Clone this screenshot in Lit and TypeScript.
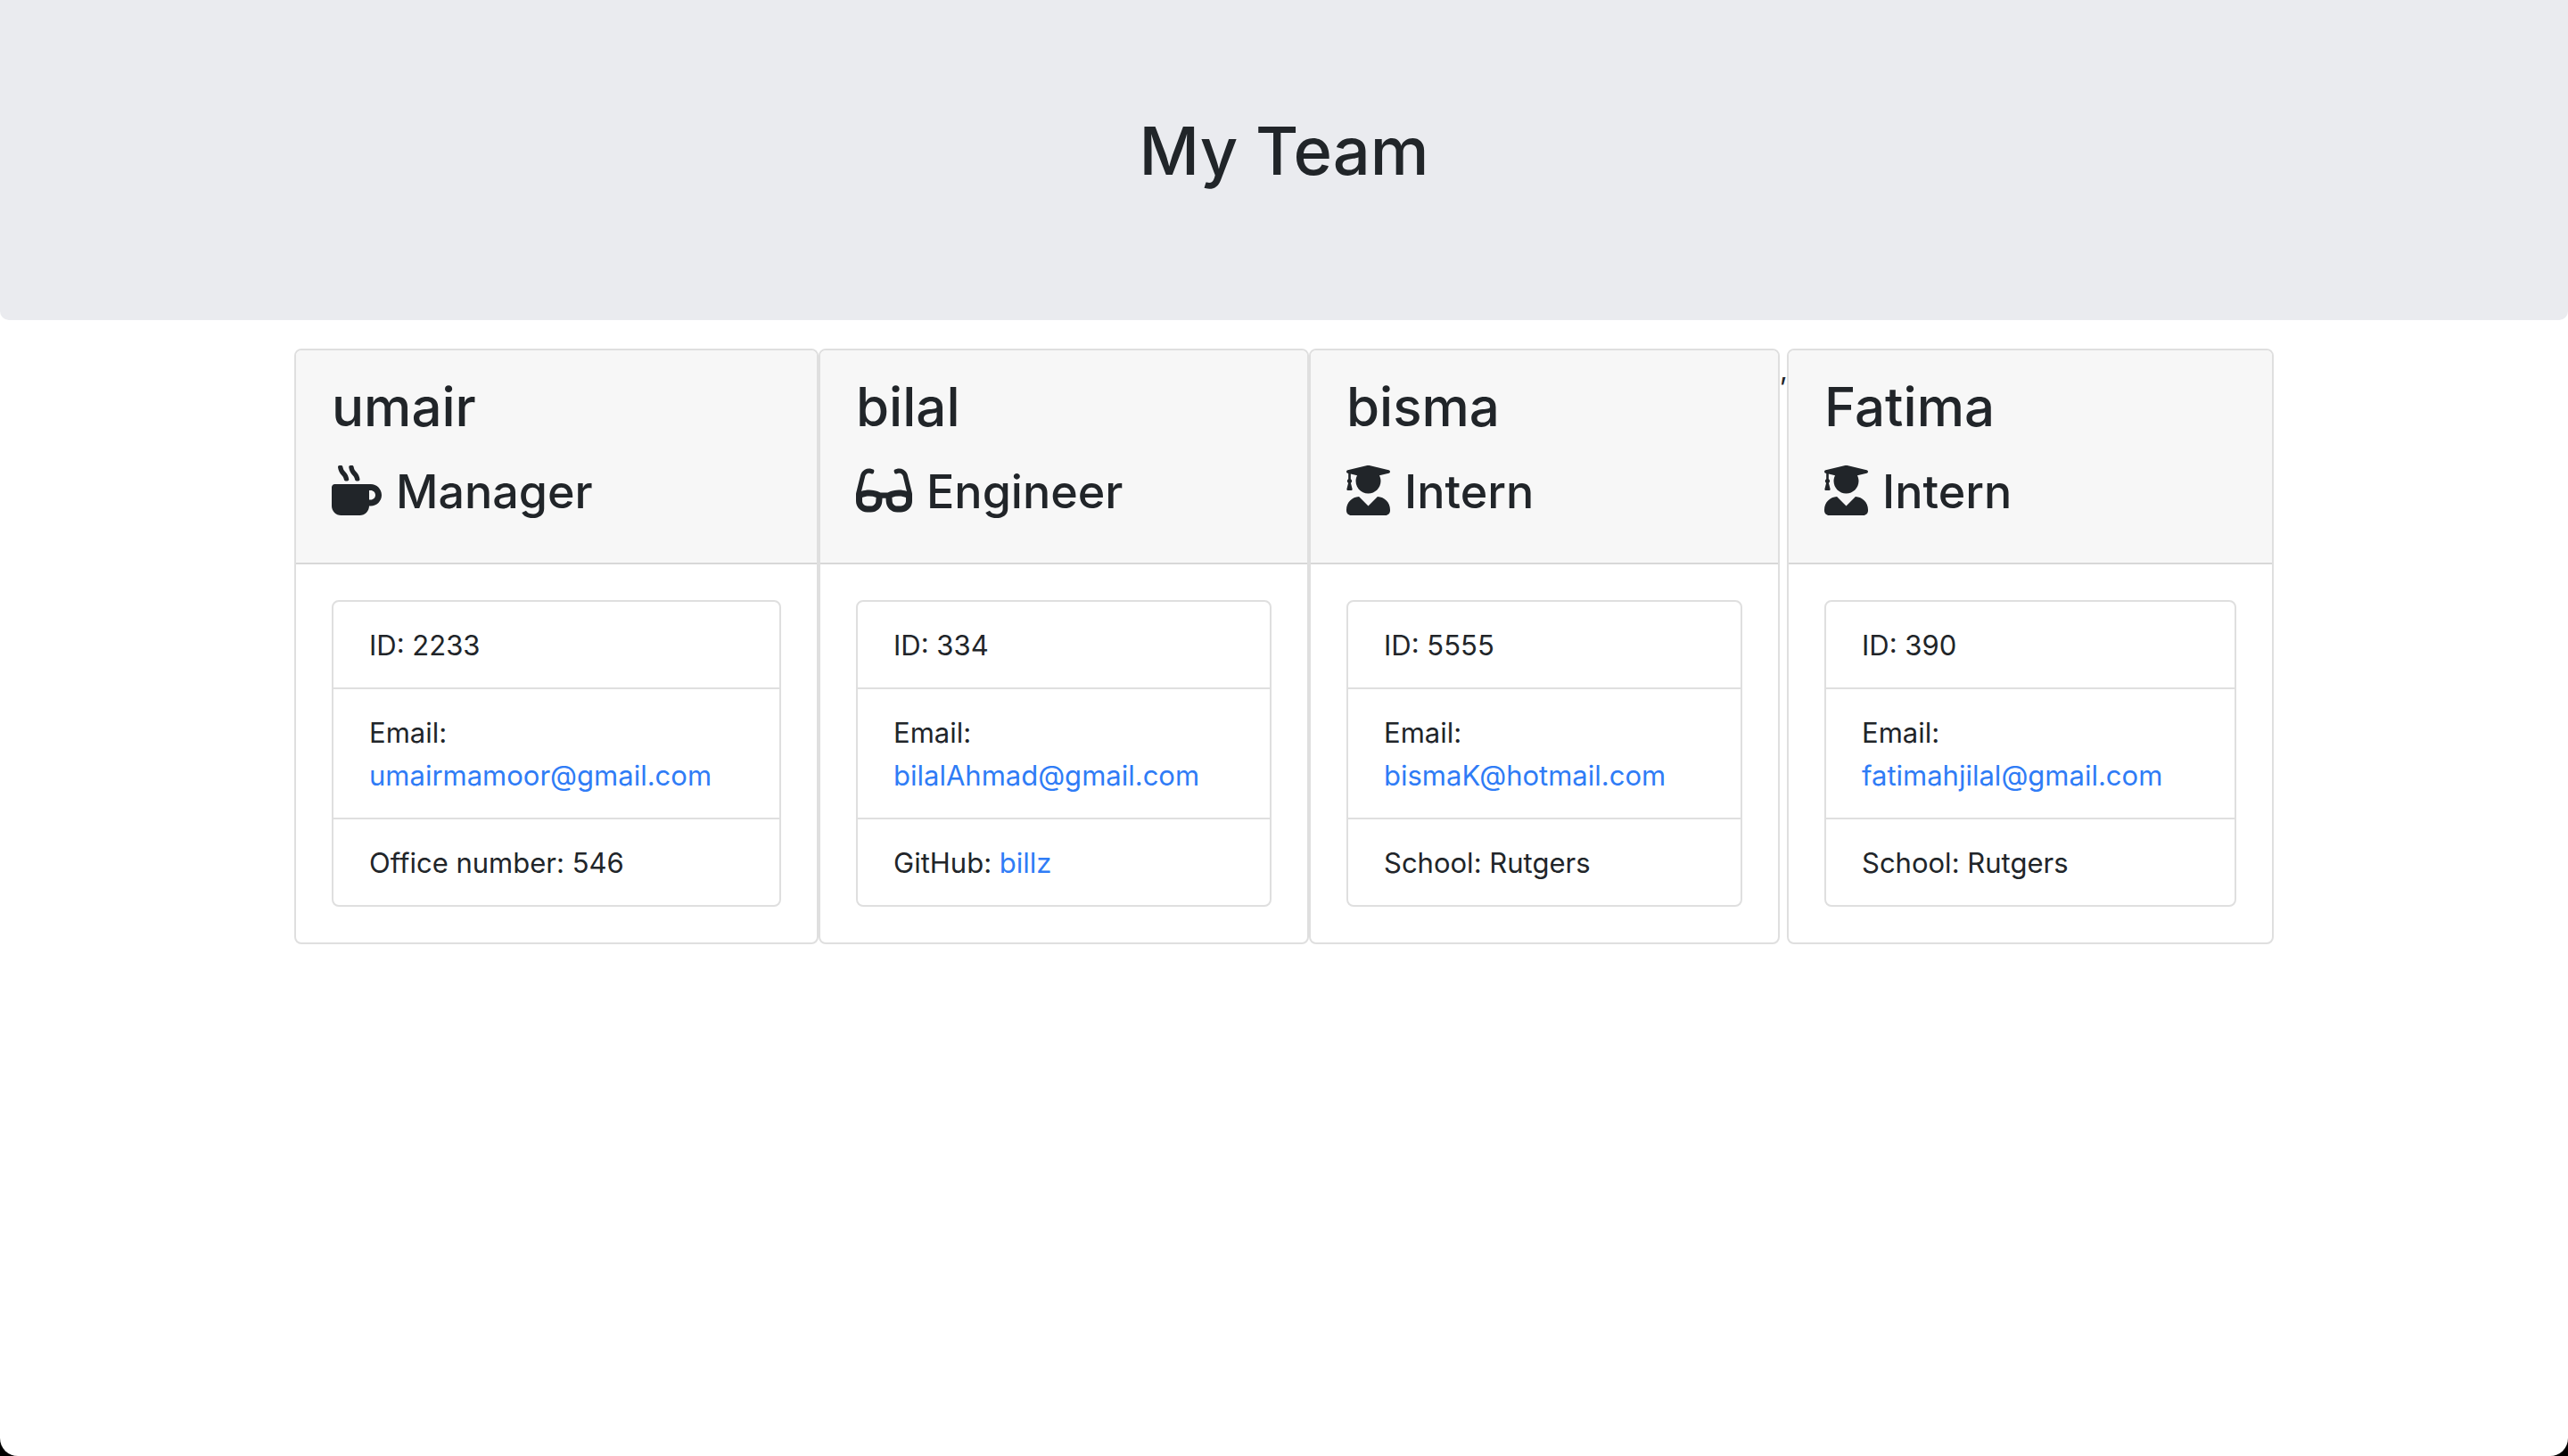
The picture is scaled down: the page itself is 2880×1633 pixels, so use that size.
import { LitElement, html, css, svg, nothing } from "lit";
import { customElement, property } from "lit/decorators.js";

interface Glyph {
  width: number;
  path: string;
}

interface Member {
  name: string;
  role: "Manager" | "Engineer" | "Intern";
  id: string;
  email: string;
  label: string;
  value: string;
  href?: string;
}

const GLYPHS: Record<Member["role"], Glyph> = {
  Manager: {
    width: 512,
    path: "M127.1 146.5c1.3 7.7 8 13.5 16 13.5h16.5c9.8 0 17.6-8.5 16.3-18-3.8-28.2-16.4-54.2-36.6-74.7-14.4-14.7-23.6-33.3-26.4-53.5C111.8 5.9 105 0 96.8 0H80.4C70.6 0 63 8.5 64.1 18c3.9 31.9 18 61.3 40.6 84.4 12 12.2 19.7 27.5 22.4 44.1zm112 0c1.3 7.7 8 13.5 16 13.5h16.5c9.8 0 17.6-8.5 16.3-18-3.8-28.2-16.4-54.2-36.6-74.7-14.4-14.7-23.6-33.3-26.4-53.5C223.8 5.9 217 0 208.8 0h-16.4c-9.8 0-17.5 8.5-16.3 18 3.9 31.9 18 61.3 40.6 84.4 12 12.2 19.7 27.5 22.4 44.1zM400 192H32c-17.7 0-32 14.3-32 32v192c0 53 43 96 96 96h192c53 0 96-43 96-96h16c61.8 0 112-50.2 112-112s-50.2-112-112-112zm0 160h-16v-96h16c26.5 0 48 21.5 48 48s-21.5 48-48 48z",
  },
  Engineer: {
    width: 576,
    path: "M574.1 280.37L528.75 98.66c-5.91-23.7-21.59-44.05-43-55.81-21.44-11.73-46.97-14.11-70.19-6.33l-15.25 5.08c-8.39 2.79-12.92 11.86-10.12 20.24l5.06 15.18c2.79 8.38 11.85 12.91 20.23 10.12l13.18-4.39c10.87-3.62 23-3.57 33.16 1.73 10.29 5.37 17.57 14.56 20.37 25.82l38.46 153.82c-22.19-6.81-49.79-12.46-81.2-12.46-34.77 0-73.98 7.02-114.85 26.74h-73.18c-40.87-19.74-80.08-26.75-114.86-26.75-31.42 0-59.02 5.65-81.21 12.46l38.46-153.83c2.79-11.25 10.09-20.45 20.38-25.81 10.16-5.3 22.28-5.35 33.15-1.73l13.17 4.39c8.38 2.79 17.44-1.74 20.23-10.12l5.06-15.18c2.8-8.38-1.73-17.45-10.12-20.24l-15.25-5.08c-23.22-7.78-48.75-5.41-70.19 6.33-21.41 11.77-37.09 32.11-43 55.8L1.9 280.37A64.218 64.218 0 0 0 0 295.86v70.25C0 429.01 51.58 480 115.2 480h37.12c60.28 0 110.37-45.94 114.88-105.37l2.93-38.63h35.75l2.93 38.63C313.31 434.06 363.4 480 423.68 480h37.12c63.62 0 115.2-50.99 115.2-113.88v-70.25c0-5.23-.64-10.43-1.9-15.5zm-370.72 89.42c-1.97 25.91-24.4 46.21-51.06 46.21H115.2C86.97 416 64 393.62 64 366.11v-37.54c18.12-6.49 43.42-12.92 72.58-12.92 23.86 0 47.26 4.33 69.93 12.92l-3.13 41.22zM512 366.12c0 27.51-22.97 49.88-51.2 49.88h-37.12c-26.67 0-49.1-20.3-51.06-46.21l-3.13-41.22c22.67-8.59 46.08-12.92 69.95-12.92 29.17 0 54.42 6.43 72.56 12.92v37.55z",
  },
  Intern: {
    width: 448,
    path: "M319.4 320.6L224 416l-95.4-95.4C57.1 323.7 0 382.2 0 454.4v9.6c0 26.5 21.5 48 48 48h352c26.5 0 48-21.5 48-48v-9.6c0-72.2-57.1-130.7-128.6-133.8zM13.6 79.8l6.4 1.5v58.4c-7 4.2-12 11.5-12 20.3 0 8.4 4.6 15.4 11.1 19.7L3.5 242c-1.7 6.9 2.1 14 7.6 14h41.8c5.5 0 9.3-7.1 7.6-14l-15.6-62.3C51.4 175.4 56 168.4 56 160c0-8.8-5-16.1-12-20.3V87.1l66 15.9c-8.6 17.2-14 36.4-14 57 0 70.7 57.3 128 128 128s128-57.3 128-128c0-20.6-5.3-39.8-14-57l96.3-23.2c18.2-4.4 18.2-27.1 0-31.5l-190.4-46c-13-3.1-26.7-3.1-39.7 0L13.6 48.2c-18.1 4.4-18.1 27.2 0 31.6z",
  },
};

const TEAM: Member[] = [
  { name: "umair", role: "Manager", id: "2233", email: "umairmamoor@gmail.com", label: "Office number", value: "546" },
  { name: "bilal", role: "Engineer", id: "334", email: "bilalAhmad@gmail.com", label: "GitHub", value: "billz", href: "https://github.com/billz" },
  { name: "bisma", role: "Intern", id: "5555", email: "bismaK@hotmail.com", label: "School", value: "Rutgers" },
  { name: "Fatima", role: "Intern", id: "390", email: "fatimahjilal@gmail.com", label: "School", value: "Rutgers" },
];

@customElement("member-card")
export class MemberCard extends LitElement {
  @property({ attribute: false }) member!: Member;

  static styles = css`
    :host {
      display: block;
      min-width: 0;
      box-sizing: border-box;
      border: 2px solid #dfdfdf;
      border-radius: 8px;
      background: #fff;
      overflow: hidden;
    }
    .header {
      padding: 24px 40px;
      background: #f7f7f7;
      border-bottom: 2px solid #d8d8d8;
    }
    .name,
    .role {
      margin: 0 0 14px;
      font-weight: 500;
    }
    .name {
      font-size: 60px;
      line-height: 79px;
    }
    .role {
      display: flex;
      align-items: center;
      gap: 16px;
      font-size: 52px;
      line-height: 83px;
    }
    .icon {
      height: 56px;
      flex: none;
      margin-bottom: 4px;
      fill: currentColor;
    }
    .body {
      padding: 40px;
    }
    .list {
      margin: 0;
      padding: 0;
      list-style: none;
      border: 2px solid #dfdfdf;
      border-radius: 8px;
    }
    .item {
      padding: 25px 40px 23px;
    }
    .item + .item {
      border-top: 2px solid #dfdfdf;
    }
    .link {
      color: #2f7cf6;
      text-decoration: none;
    }
    .email {
      display: block;
    }
  `;

  render() {
    const m = this.member;
    const glyph = GLYPHS[m.role];
    return html`
      <div class="header">
        <h2 class="name">${m.name}</h2>
        <h3 class="role">
          <svg class="icon" viewBox="0 0 ${glyph.width} 512" aria-hidden="true">${svg`<path d=${glyph.path}></path>`}</svg>
          <span>${m.role}</span>
        </h3>
      </div>
      <div class="body">
        <ul class="list">
          <li class="item">ID: ${m.id}</li>
          <li class="item">Email: <a class="link email" href="mailto:${m.email}">${m.email}</a></li>
          <li class="item">${m.label}: ${m.href ? html`<a class="link" href=${m.href}>${m.value}</a>` : m.value}</li>
        </ul>
      </div>
    `;
  }
}

@customElement("app-root")
export class AppRoot extends LitElement {
  static styles = css`
    :host {
      display: block;
      background: #000;
      color: #212529;
      font-family: Inter, "Liberation Sans", sans-serif;
      font-size: 31px;
      line-height: 48px;
    }
    .page {
      min-height: 100vh;
      background: #fff;
      border-radius: 0 0 20px 20px;
    }
    .banner {
      padding: 121px 64px 126px;
      margin-bottom: 32px;
      background: #eaebef;
      border-radius: 0 0 10px 10px;
    }
    .title {
      margin: 0 0 16px;
      font-size: 74px;
      line-height: 96px;
      font-weight: 500;
      text-align: center;
    }
    .team {
      display: grid;
      grid-template-columns: 588fr 550fr 528fr 8px 546fr;
      max-width: 2220px;
      margin: 0 auto;
    }
  `;

  render() {
    return html`
      <div class="page">
        <header class="banner"><h1 class="title">My Team</h1></header>
        <main class="team">
          ${TEAM.map(
            (m, i) => html`${i === 3 ? html`<span>,</span>` : nothing}<member-card .member=${m}></member-card>`
          )}
        </main>
      </div>
    `;
  }
}
